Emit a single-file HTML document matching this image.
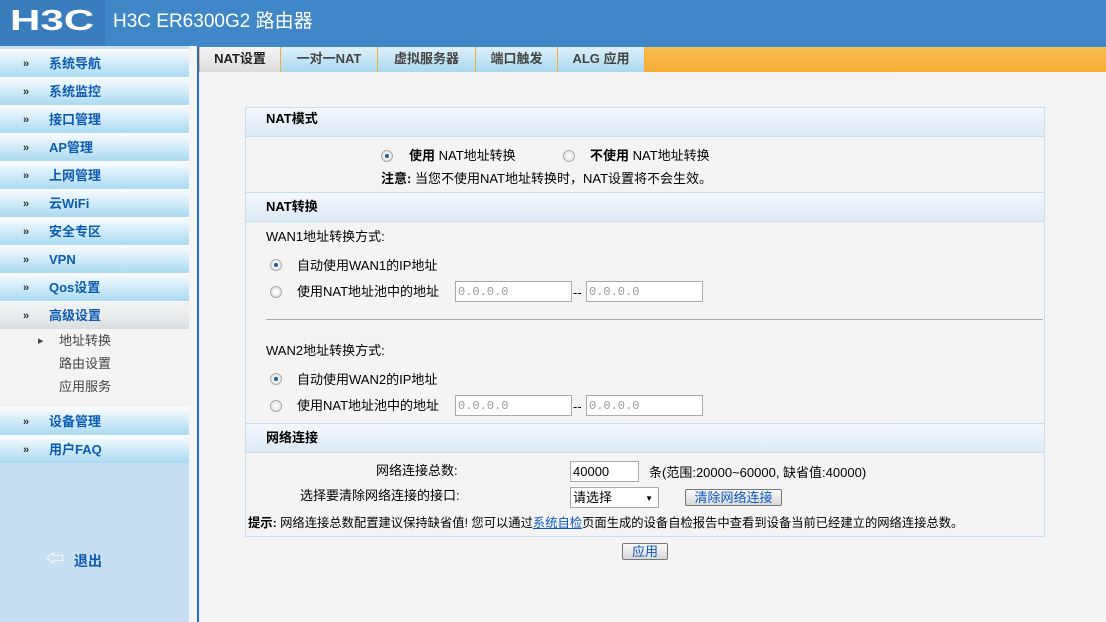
<!DOCTYPE html>
<html><head><meta charset="utf-8"><style>
*{margin:0;padding:0;box-sizing:border-box}
body{width:1106px;height:622px;overflow:hidden;background:#f4f4f4;font-family:"Liberation Sans","Noto Sans CJK SC",sans-serif;font-size:13px;line-height:16px;color:#000;position:relative}
.a{position:absolute;white-space:nowrap}
#hd{left:0;top:0;width:1106px;height:46px;background:#3f87c6}
#lb{left:0;top:0;width:105px;height:46px;background:#3a7dbd}
#logo{left:10px;top:5px;color:#fff;font:bold 29px/32px "Liberation Sans",sans-serif;transform:scaleX(1.45);transform-origin:left}
#title{left:113px;top:11px;color:#fff;font-size:19px;line-height:22px}
#sb{left:0;top:46px;width:189px;height:576px;background:#c8def2}
.it{position:absolute;left:0;width:189px;height:28px;background:linear-gradient(#f8fcff,#d8eef9 40%,#a9daf1);color:#0c5cb3;font-weight:bold;font-size:13px;padding:6px 0 0 49px;border-top:1px solid #fff}
.it:before{content:"»";position:absolute;left:23px;top:6px;color:#333;font-size:11px}
.gr{background:linear-gradient(#f3f3f3,#e8ecef 50%,#d9dde0)}
.sub{position:absolute;left:59px;color:#444;font-size:13px}
#vl{left:197px;top:46px;width:2px;height:576px;background:#1a6ee8}
#tabs{left:199px;top:46px;width:907px;height:26px;background:linear-gradient(#f8bb55,#f5ad32);border-top:1px solid #3f87c6}
.tb{position:absolute;top:47px;height:25px;background:linear-gradient(#def0fa,#a9d9f0);border-right:1px solid #f5ad32;color:#444;font-weight:bold;font-size:13px;text-align:center;padding-top:4px}
#panel{left:245px;top:107px;width:800px;height:430px;border:1px solid #c6dcef;background:#f4f4f4}
.ph{position:absolute;left:0;width:798px;height:30px;background:linear-gradient(#f4f8fc,#dde9f5);border-top:1px solid #c6dcef;border-bottom:1px solid #c6dcef;font-weight:bold;font-size:13px;padding:6px 0 0 20px}
.rd{position:absolute;width:12px;height:12px;border-radius:50%;border:1px solid #aaa;background:radial-gradient(#fff,#ddd)}
.rd.on:after{content:"";position:absolute;left:3px;top:3px;width:4px;height:4px;border-radius:50%;background:#1a5e9a}
.in{position:absolute;height:21px;border:1px solid #aaa;background:#fff;color:#999;font-family:"Liberation Mono",monospace;font-size:12px;padding:2px 2px}
.bt{position:absolute;height:17px;border:1px solid #777;border-radius:2px;background:linear-gradient(#fafafa,#d8d8d8);color:#0b58c2;font-size:13px;line-height:14px;text-align:center;padding-top:1px}
</style></head><body>
<div id="hd" class="a"></div>
<div id="lb" class="a"></div>
<div id="logo" class="a">H3C</div>
<div id="title" class="a">H3C ER6300G2 路由器</div>
<div id="sb" class="a"></div>
<div class="it" style="top:49px">系统导航</div>
<div class="it" style="top:77px">系统监控</div>
<div class="it" style="top:105px">接口管理</div>
<div class="it" style="top:133px">AP管理</div>
<div class="it" style="top:161px">上网管理</div>
<div class="it" style="top:189px">云WiFi</div>
<div class="it" style="top:217px">安全专区</div>
<div class="it" style="top:245px">VPN</div>
<div class="it" style="top:273px">Qos设置</div>
<div class="it gr" style="top:301px">高级设置</div>
<div class="a" style="left:0;top:329px;width:189px;height:78px;background:#f4f4f4"></div>
<div class="a" style="left:38px;top:333px;color:#445;font-size:11px">▸</div>
<div class="sub" style="top:333px">地址转换</div>
<div class="sub" style="top:356px">路由设置</div>
<div class="sub" style="top:379px">应用服务</div>
<div class="it" style="top:407px">设备管理</div>
<div class="it" style="top:435px">用户FAQ</div>
<div class="a" style="left:46px;top:551px;color:#fff;font-size:18px;font-weight:bold">⇦</div>
<div class="a" style="left:74px;top:553px;color:#0c5cb3;font-weight:bold;font-size:14px">退出</div>
<div id="vl" class="a"></div>
<div id="tabs" class="a"></div>
<div class="tb" style="left:200px;width:81px;background:linear-gradient(#f4f4f4,#dcdcdc);color:#222">NAT设置</div>
<div class="tb" style="left:281px;width:97px">一对一NAT</div>
<div class="tb" style="left:378px;width:98px">虚拟服务器</div>
<div class="tb" style="left:476px;width:82px">端口触发</div>
<div class="tb" style="left:558px;width:87px">ALG 应用</div>
<div id="panel" class="a">
<div class="ph" style="top:-1px;padding-top:3px">NAT模式</div>
<div class="rd on" style="left:135px;top:42px"></div>
<div class="a" style="left:163px;top:40px"><b>使用</b> NAT地址转换</div>
<div class="rd" style="left:317px;top:42px"></div>
<div class="a" style="left:344px;top:40px"><b>不使用</b> NAT地址转换</div>
<div class="a" style="left:135px;top:63px"><b>注意:</b> 当您不使用NAT地址转换时，NAT设置将不会生效。</div>
<div class="ph" style="top:84px">NAT转换</div>
<div class="a" style="left:20px;top:121px">WAN1地址转换方式:</div>
<div class="rd on" style="left:24px;top:151px"></div>
<div class="a" style="left:51px;top:150px">自动使用WAN1的IP地址</div>
<div class="rd" style="left:24px;top:178px"></div>
<div class="a" style="left:51px;top:176px">使用NAT地址池中的地址</div>
<div class="in" style="left:209px;top:173px;width:117px">0.0.0.0</div>
<div class="a" style="left:327px;top:177px">--</div>
<div class="in" style="left:340px;top:173px;width:117px">0.0.0.0</div>
<div class="a" style="left:20px;top:211px;width:777px;height:1px;background:#aaa"></div>
<div class="a" style="left:20px;top:235px">WAN2地址转换方式:</div>
<div class="rd on" style="left:24px;top:265px"></div>
<div class="a" style="left:51px;top:264px">自动使用WAN2的IP地址</div>
<div class="rd" style="left:24px;top:292px"></div>
<div class="a" style="left:51px;top:290px">使用NAT地址池中的地址</div>
<div class="in" style="left:209px;top:287px;width:117px">0.0.0.0</div>
<div class="a" style="left:327px;top:291px">--</div>
<div class="in" style="left:340px;top:287px;width:117px">0.0.0.0</div>
<div class="ph" style="top:315px">网络连接</div>
<div class="a" style="left:130px;top:355px">网络连接总数:</div>
<div class="in" style="left:324px;top:353px;width:69px;color:#000;font-family:'Liberation Sans',sans-serif;font-size:13px">40000</div>
<div class="a" style="left:403px;top:357px">条(范围:20000~60000, 缺省值:40000)</div>
<div class="a" style="left:54px;top:380px">选择要清除网络连接的接口:</div>
<div class="in" style="left:324px;top:379px;width:89px;color:#000;font-family:'Liberation Sans','Noto Sans CJK SC',sans-serif;font-size:13px;line-height:15px">请选择<span style="position:absolute;right:5px;top:3px;font-size:8px">▼</span></div>
<div class="bt" style="left:439px;top:381px;width:97px">清除网络连接</div>
<div class="a" style="left:2px;top:407px;font-size:12.3px"><b>提示:</b> 网络连接总数配置建议保持缺省值! 您可以通过<u style="color:#0b58c2">系统自检</u>页面生成的设备自检报告中查看到设备当前已经建立的网络连接总数。</div>
</div>
<div class="bt" style="left:622px;top:543px;width:46px">应用</div>
</body></html>
